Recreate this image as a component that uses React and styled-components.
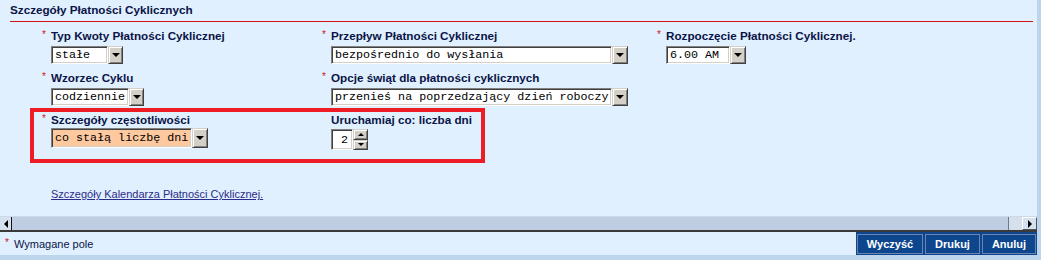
import React from 'react';
import styled, { createGlobalStyle } from 'styled-components';

const Global = createGlobalStyle`
  html, body { margin: 0; padding: 0; background: #BCD4EC; }
  body { font-family: "Liberation Sans", Arial, sans-serif; }
`;

const Page = styled.div`
  width: 1041px;
  height: 260px;
  box-sizing: border-box;
  padding: 0 4px 5px 0;
  background: #BCD4EC;
  display: flex;
  flex-direction: column;
  overflow: hidden;
`;

const Panel = styled.section`
  height: 216px;
  background: #E0F0FF;
  display: flex;
  flex-direction: column;
`;

const Title = styled.h2`
  margin: 0;
  padding: 3px 0 0 10px;
  font-size: 11.7px;
  line-height: 14px;
  font-weight: bold;
  color: #0C1447;
`;

const Rule = styled.hr`
  margin: 4px 4px 0 10px;
  border: 0;
  height: 1px;
  background: #D41414;
`;

const FieldGrid = styled.div`
  display: grid;
  grid-template-columns: 280px 335px 1fr;
  row-gap: 7px;
  padding-left: 42px;
  margin-top: 7px;
`;

const Highlight = styled.div`
  margin: 2px 0 0 30px;
  width: 455px;
  box-sizing: border-box;
  border: 4px solid #EE1C24;
  padding: 1px 0 9px 8px;
  display: grid;
  grid-template-columns: 280px 1fr;
`;

const Field = styled.div`
  display: flex;
`;

const Star = styled.span`
  width: 9px;
  flex: none;
  color: #CC1A1A;
  font-size: 10px;
  line-height: 12px;
`;

const FieldBody = styled.div`
  display: flex;
  flex-direction: column;
  align-items: flex-start;
  gap: ${p => p.$gap}px;
`;

const Label = styled.label`
  font-size: 11.7px;
  line-height: 14px;
  font-weight: bold;
  color: #0C1447;
  white-space: nowrap;
`;

const SelectWrap = styled.div`
  display: inline-flex;
  height: ${p => p.$h}px;
`;

const SelectField = styled.div`
  width: ${p => p.$w}px;
  box-sizing: border-box;
  border: 1px solid;
  border-color: #808080 #fff #fff #808080;
  box-shadow: inset 1px 1px 0 #404040, inset -1px -1px 0 #D4D0C8;
  background: ${p => p.$bg || '#fff'};
  font-family: "Liberation Mono", "Courier New", monospace;
  font-size: 11.7px;
  padding-left: 3px;
  display: flex;
  align-items: center;
  white-space: pre;
  overflow: hidden;
  color: #000;
`;

const ArrowButton = styled.div`
  width: ${p => p.$w || 16}px;
  box-sizing: border-box;
  background: #D4D0C8;
  border: 1px solid;
  border-color: #D4D0C8 #404040 #404040 #D4D0C8;
  box-shadow: inset 1px 1px 0 #fff, inset -1px -1px 0 #808080;
  display: flex;
  align-items: center;
  justify-content: center;
  &::after {
    content: '';
    border-left: 4px solid transparent;
    border-right: 4px solid transparent;
    border-top: 4px solid #000;
  }
`;

const Spinner = styled.div`
  display: inline-flex;
  height: 21px;
  margin-top: 1px;
`;

const SpinInput = styled.div`
  width: 22px;
  box-sizing: border-box;
  border: 1px solid;
  border-color: #808080 #fff #fff #808080;
  box-shadow: inset 1px 1px 0 #404040, inset -1px -1px 0 #D4D0C8;
  background: #fff;
  font-family: "Liberation Mono", "Courier New", monospace;
  font-size: 11.7px;
  display: flex;
  align-items: center;
  justify-content: flex-end;
  padding-right: 4px;
`;

const SpinButtons = styled.div`
  width: 15px;
  display: flex;
  flex-direction: column;
`;

const SpinButton = styled.div`
  flex: 1;
  box-sizing: border-box;
  background: #D4D0C8;
  border: 1px solid;
  border-color: #D4D0C8 #404040 #404040 #D4D0C8;
  box-shadow: inset 1px 1px 0 #fff, inset -1px -1px 0 #808080;
  display: flex;
  align-items: center;
  justify-content: center;
  &::after {
    content: '';
    border-left: 3px solid transparent;
    border-right: 3px solid transparent;
    ${p => (p.$up ? 'border-bottom: 3px solid #000;' : 'border-top: 3px solid #000;')}
  }
`;

const CalendarLink = styled.a`
  align-self: flex-start;
  margin: 24px 0 0 51px;
  font-size: 11px;
  line-height: 14px;
  color: #2B2B88;
  text-decoration: underline;
`;

const ScrollBar = styled.div`
  height: 13px;
  display: flex;
  border-top: 1px solid #CCD9EA;
  border-bottom: 2px solid #3A3A3A;
  background: #BFCDE2;
`;

const ScrollArrow = styled.div`
  width: ${p => p.$w}px;
  box-sizing: border-box;
  background: #D6E1EE;
  display: flex;
  align-items: center;
  justify-content: center;
  ${p => p.$raised && 'border: 1px solid; border-color: #fff #555 #555 #fff;'}
  &::after {
    content: '';
    border-top: 4px solid transparent;
    border-bottom: 4px solid transparent;
    ${p => (p.$dir === 'left' ? 'border-right: 4px solid #000;' : 'border-left: 4px solid #000;')}
  }
`;

const Thumb = styled.div`
  flex: 1;
  border-left: 1px solid #111;
  border-right: 1px solid #6E7A8A;
  background: #BFCDE2;
`;

const TrackGap = styled.div`
  width: 13px;
  background: #D5E0EC;
`;

const Footer = styled.footer`
  height: 23px;
  display: flex;
  justify-content: space-between;
  background: #E0F0FF;
`;

const Note = styled.div`
  display: flex;
  align-items: center;
  padding-left: 5px;
  font-size: 11px;
  color: #0C1447;
`;

const NoteStar = styled.span`
  color: #CC1A1A;
  font-size: 10px;
  width: 9px;
  align-self: flex-start;
  margin-top: 5px;
`;

const ButtonGroup = styled.div`
  display: flex;
  gap: 2px;
  padding: 2px 1px 1px 1px;
  background: #0E468E;
`;

const ActionButton = styled.button`
  width: ${p => p.$w}px;
  margin: 0;
  padding: 0;
  border: 1px solid #6C84B4;
  background: #0E468E;
  color: #fff;
  font-family: "Liberation Sans", Arial, sans-serif;
  font-weight: bold;
  font-size: 11px;
  cursor: pointer;
`;

function Select({ value, w, h = 18, bg, arrowW }) {
  return (
    <SelectWrap $h={h}>
      <SelectField $w={w} $bg={bg}>{value}</SelectField>
      <ArrowButton $w={arrowW} />
    </SelectWrap>
  );
}

function FormField({ required = true, label, gap = 3, children }) {
  return (
    <Field>
      <Star>{required ? '*' : ''}</Star>
      <FieldBody $gap={gap}>
        <Label>{label}</Label>
        {children}
      </FieldBody>
    </Field>
  );
}

export default function App() {
  return (
    <>
      <Global />
      <Page>
        <Panel>
          <Title>Szczegóły Płatności Cyklicznych</Title>
          <Rule />
          <FieldGrid>
            <FormField label="Typ Kwoty Płatności Cyklicznej">
              <Select value="stałe" w={57} arrowW={15} />
            </FormField>
            <FormField label="Przepływ Płatności Cyklicznej">
              <Select value="bezpośrednio do wysłania" w={281} />
            </FormField>
            <FormField label="Rozpoczęcie Płatności Cyklicznej.">
              <Select value="6.00 AM" w={64} />
            </FormField>
            <FormField label="Wzorzec Cyklu">
              <Select value="codziennie" w={78} arrowW={15} />
            </FormField>
            <FormField label="Opcje świąt dla płatności cyklicznych">
              <Select value="przenieś na poprzedzający dzień roboczy" w={281} />
            </FormField>
          </FieldGrid>
          <Highlight>
            <FormField label="Szczegóły częstotliwości" gap={1}>
              <Select value="co stałą liczbę dni" w={141} h={20} bg="#FFC9A0" />
            </FormField>
            <FormField required={false} label="Uruchamiaj co: liczba dni" gap={1}>
              <Spinner>
                <SpinInput>2</SpinInput>
                <SpinButtons>
                  <SpinButton $up />
                  <SpinButton />
                </SpinButtons>
              </Spinner>
            </FormField>
          </Highlight>
          <CalendarLink href="#">Szczegóły Kalendarza Płatności Cyklicznej.</CalendarLink>
        </Panel>
        <ScrollBar>
          <ScrollArrow $w={11} $dir="left" />
          <Thumb />
          <TrackGap />
          <ScrollArrow $w={15} $dir="right" $raised />
        </ScrollBar>
        <Footer>
          <Note>
            <NoteStar>*</NoteStar>
            Wymagane pole
          </Note>
          <ButtonGroup>
            <ActionButton $w={66}>Wyczyść</ActionButton>
            <ActionButton $w={55}>Drukuj</ActionButton>
            <ActionButton $w={54}>Anuluj</ActionButton>
          </ButtonGroup>
        </Footer>
      </Page>
    </>
  );
}
